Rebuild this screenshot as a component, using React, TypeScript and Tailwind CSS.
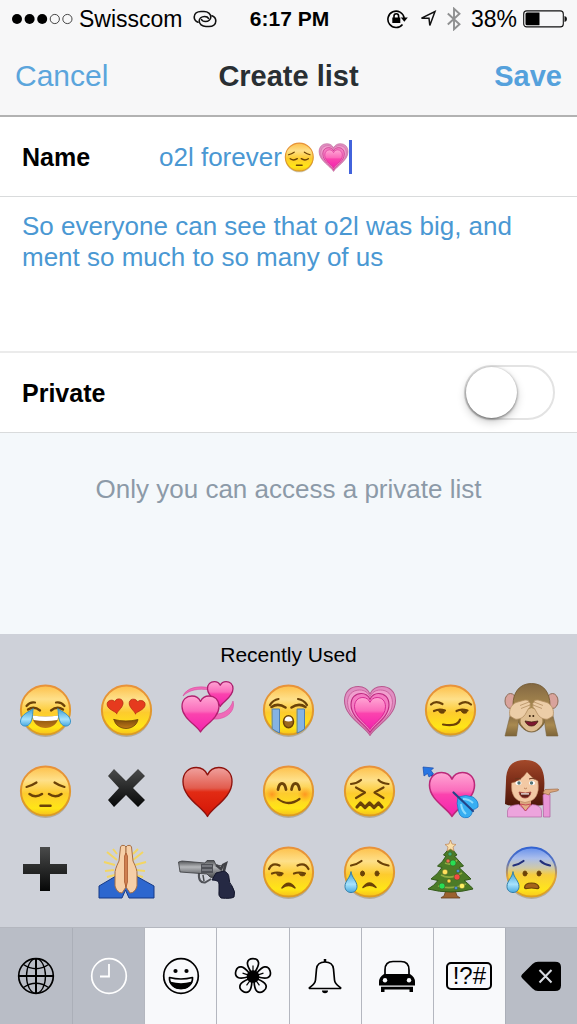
import React, { useState } from "react";

const HEART =
  "M50 100C40 81 0 62 0 29C0 10 12 0 27 0C38 0 46 6 50 15C54 6 62 0 73 0C88 0 100 10 100 29C100 62 60 81 50 100Z";
const INK = "#6b4208";

function SharedDefs() {
  return (
    <svg className="absolute h-0 w-0" aria-hidden="true">
      <defs>
        <linearGradient id="face" x1="0" y1="0" x2="0" y2="1">
          <stop offset="0" stopColor="#fdc04a" />
          <stop offset=".28" stopColor="#fee08a" />
          <stop offset=".55" stopColor="#fdcb2e" />
          <stop offset=".85" stopColor="#ffe616" />
          <stop offset="1" stopColor="#f6bf1c" />
        </linearGradient>
        <linearGradient id="blueFace" x1="0" y1="0" x2="0" y2="1">
          <stop offset="0" stopColor="#6690ec" />
          <stop offset=".22" stopColor="#a9bdec" />
          <stop offset=".42" stopColor="#cfc9a8" />
          <stop offset=".56" stopColor="#f8cd3c" />
          <stop offset=".85" stopColor="#ffe51c" />
          <stop offset="1" stopColor="#f8c91c" />
        </linearGradient>
        <linearGradient id="rim" x1="0" y1="0" x2="0" y2="1">
          <stop offset="0" stopColor="#e8923a" />
          <stop offset="1" stopColor="#dc9c22" />
        </linearGradient>
        <linearGradient id="blueRim" x1="0" y1="0" x2="0" y2="1">
          <stop offset="0" stopColor="#3263d2" />
          <stop offset=".3" stopColor="#5b75bf" />
          <stop offset=".6" stopColor="#dfa33a" />
          <stop offset="1" stopColor="#dda01f" />
        </linearGradient>
        <linearGradient id="pink" x1="0" y1="0" x2="0" y2="1">
          <stop offset="0" stopColor="#ffa6d4" />
          <stop offset=".42" stopColor="#fb6cbc" />
          <stop offset=".5" stopColor="#fb43ae" />
          <stop offset="1" stopColor="#f321ae" />
        </linearGradient>
        <linearGradient id="red" x1="0" y1="0" x2="0" y2="1">
          <stop offset="0" stopColor="#f0a19e" />
          <stop offset=".42" stopColor="#e25c4e" />
          <stop offset=".5" stopColor="#e22b14" />
          <stop offset="1" stopColor="#d31505" />
        </linearGradient>
        <linearGradient id="black" x1="0" y1="0" x2="0" y2="1">
          <stop offset="0" stopColor="#4a4b4b" />
          <stop offset="1" stopColor="#060707" />
        </linearGradient>
        <linearGradient id="tear" x1="0" y1="0" x2="0" y2="1">
          <stop offset="0" stopColor="#3f9fd8" />
          <stop offset=".6" stopColor="#a8e2fb" />
          <stop offset="1" stopColor="#49a9df" />
        </linearGradient>
        <linearGradient id="mouth" x1="0" y1="0" x2="0" y2="1">
          <stop offset="0" stopColor="#7c4a0c" />
          <stop offset="1" stopColor="#c07a17" />
        </linearGradient>
        <linearGradient id="steel" x1="0" y1="0" x2="0" y2="1">
          <stop offset="0" stopColor="#4b4d50" />
          <stop offset=".35" stopColor="#b5b7ba" />
          <stop offset="1" stopColor="#37393d" />
        </linearGradient>
        <linearGradient id="hair" x1="0" y1="0" x2="0" y2="1">
          <stop offset="0" stopColor="#a3492a" />
          <stop offset=".4" stopColor="#80301a" />
          <stop offset="1" stopColor="#4b1609" />
        </linearGradient>
        <linearGradient id="fur" x1="0" y1="0" x2="0" y2="1">
          <stop offset="0" stopColor="#836842" />
          <stop offset=".5" stopColor="#a98a50" />
          <stop offset="1" stopColor="#7d6438" />
        </linearGradient>
        <radialGradient id="blush">
          <stop offset="0" stopColor="#ff7a1c" stopOpacity=".65" />
          <stop offset="1" stopColor="#ff9a1c" stopOpacity="0" />
        </radialGradient>
      </defs>
    </svg>
  );
}

type Children = { children?: React.ReactNode };

function Emoji({ children, small }: Children & { small?: boolean }) {
  return (
    <svg
      viewBox="0 0 60 60"
      className={small ? "h-[34px] w-[34px] shrink-0 overflow-visible" : "h-[60px] w-[60px] overflow-visible"}
      aria-hidden="true"
    >
      {children}
    </svg>
  );
}

function Heart({ x, y, w, h, fill, stroke, sw = 0, r = 0 }: {
  x: number; y: number; w: number; h: number; fill: string; stroke?: string; sw?: number; r?: number;
}) {
  return (
    <path
      d={HEART}
      transform={`translate(${x} ${y}) rotate(${r}) scale(${w / 100} ${h / 100})`}
      fill={fill}
      stroke={stroke}
      strokeWidth={sw}
      strokeLinejoin="round"
    />
  );
}

function Face({ children, blue }: Children & { blue?: boolean }) {
  return (
    <>
      <ellipse cx="30.5" cy="32" rx="24.8" ry="25" fill="#8f7f5c" opacity=".45" />
      <circle cx="30.5" cy="30" r="24.6" fill={blue ? "url(#blueFace)" : "url(#face)"} stroke={blue ? "url(#blueRim)" : "url(#rim)"} strokeWidth="2" />
      <g fill="none" stroke={INK} strokeWidth="2.200" strokeLinecap="round" strokeLinejoin="round">
        {children}
      </g>
    </>
  );
}

const drop = "M12 30C11 36 6 39 6 44.5C6 48 8.500 50.500 12 50.500S18 48 18 44.500C18 39 13 36 12 30Z";

const Joy = () => (
  <Face>
    <path d="M11.500 26Q15 21.500 20 22.500M41 22.500Q46 21.500 49.500 26" />
    <path d="M13 29.500Q19 25.500 25 30.500M36 30.500Q42 25.500 48 29.500" strokeWidth="2.300" />
    <path d="M17 35.500Q30.500 37.500 44 35.500C43 44 37 48 30.500 48S18 44 17 35.500Z" fill="url(#mouth)" stroke="none" />
    <path d="M17.500 35.500Q30.500 37.500 43.500 35.500L42.500 40Q30.500 42 18.500 40Z" fill="#fff" stroke="none" />
    <path d="M18 29C13 32 6 35 5.500 41C5.300 44.500 8 46.500 11 46C17 45 17.500 37 18 29Z" fill="url(#tear)" stroke="#3a94c9" strokeWidth="1" />
    <path d="M43 29C48 32 55 35 55.500 41C55.700 44.500 53 46.500 50 46C44 45 43.500 37 43 29Z" fill="url(#tear)" stroke="#3a94c9" strokeWidth="1" />
  </Face>
);

const HeartEyes = () => (
  <Face>
    <Heart x={10.5} y={21} w={16} h={14} r={-10} fill="#e63a1e" stroke="#b52a12" sw={5} />
    <Heart x={34} y={18.5} w={16} h={14} r={10} fill="#e63a1e" stroke="#b52a12" sw={5} />
    <path d="M18 39.500Q30 42.500 42 39.500C41 45.500 35 48.500 30 48.500S19 45.500 18 39.500Z" fill="url(#mouth)" strokeWidth=".8" />
  </Face>
);

const TwoHearts = () => (
  <>
    <path d="M6 16C9 8 21 5 33 8L33 10C21 8 12 10 6 16ZM56 21C59 32 48 40 36 39L39 34C46 34 53 30 56 21Z" fill="#f06ab8" stroke="#d84b9f" strokeWidth=".6" />
    <Heart x={30.5} y={1.5} w={25.5} h={25} fill="url(#pink)" stroke="#a81e6c" sw={5} />
    <Heart x={5} y={16} w={37} h={36} fill="url(#pink)" stroke="#b1206f" sw={3.5} />
  </>
);

const Sob = () => (
  <Face>
    <path d="M12 25Q15 20 20.500 19M40 19Q46 20 49 25" />
    <path d="M14.500 29H21.500V53Q18 51.500 14.500 49ZM39.500 29H46.500V49Q43 51.500 39.500 53Z" fill="#85b3e3" stroke="#4d7fb0" strokeWidth="1" />
    <path d="M13.500 27Q20 22.500 27.500 27.500M33.500 27.500Q41 22.500 47.500 27" strokeWidth="2.600" />
    <ellipse cx="30.500" cy="41.700" rx="5" ry="6" fill="#9c6a1e" strokeWidth="1.500" />
    <path d="M26.500 40.500Q27 36.800 30.500 36.600Q34 36.800 34.500 40.500Q30.500 42.500 26.500 40.500Z" fill="#fff" stroke="none" />
  </Face>
);

const GrowingHeart = () => (
  <>
    <Heart x={5.5} y={6.5} w={51} h={49} fill="#e08fc2" stroke="#b8578e" sw={2} />
    <Heart x={8.5} y={10} w={45} h={44} fill="#f09fce" stroke="#c9629d" sw={2} />
    <Heart x={12} y={13.500} w={38} h={39} fill="#f47cc2" stroke="#bd2a80" sw={3} />
    <Heart x={15.5} y={17.500} w={31} h={32} fill="url(#pink)" stroke="#d32591" sw={3} />
  </>
);

const Smirk = () => (
  <Face>
    <path d="M11 24.500Q15.500 20 22.500 24M39.500 24Q46 20 51 24.500" />
    <path d="M14 31Q19 28.500 25 30.500M36.500 31Q41 28.500 47.500 30.500" />
    <path d="M18 30.500Q20 34.500 24 33L24.500 30.500ZM40.500 30.500Q42.500 34.500 46.500 33L47 30.500Z" fill={INK} strokeWidth=".8" />
    <path d="M23 44.500Q38 47 40 39.500" />
  </Face>
);

const Monkey = () => (
  <>
    <ellipse cx="9.500" cy="21" rx="5.500" ry="7.500" fill="#d9a39c" stroke="#8e6c57" />
    <ellipse cx="51.500" cy="21" rx="5.500" ry="7.500" fill="#d9a39c" stroke="#8e6c57" />
    <path d="M30.500 3.500C18 3.500 12 13 12 25C12 35 17 41 19 45Q24 52 30.500 52T42 45C44 41 49 35 49 25C49 13 43 3.500 30.500 3.500Z" fill="url(#fur)" stroke="#6e552f" strokeWidth=".8" />
    <path d="M30.500 28C22 31 18 38 20 44Q25 51.500 30.500 51.500T41 44C43 38 39 31 30.500 28Z" fill="#dfbe92" />
    <circle cx="28.800" cy="36" r="1" fill="#3b2410" /><circle cx="32.300" cy="36" r="1" fill="#3b2410" />
    <path d="M24 41Q30.500 43 37 41Q35 46 30.500 46T24 41Z" fill="#7e1730" stroke="#43200e" strokeWidth=".8" />
    <path d="M9.500 34L18 38L15.500 56H4ZM51.500 34L43 38L45.500 56H57Z" fill="url(#fur)" stroke="#7a6440" strokeWidth=".6" />
    <g fill="#eccda7" stroke="#b48f62" strokeWidth=".8">
      <path d="M9 36C7.500 30 10 25 15 22.500L24 20Q28 19.500 28 22Q30 23 29 25Q30 27.500 27.500 28.500L25 33C23 37.500 18 40 14 39Z" />
      <path d="M52 36C53.500 30 51 25 46 22.500L37 20Q33 19.500 33 22Q31 23 32 25Q31 27.500 33.500 28.500L36 33C38 37.500 43 40 47 39Z" />
      <path d="M19 25.500L28 22M20 28.500L29 25M42 25.500L33 22M41 28.500L32 25" />
    </g>
  </>
);

const Pensive = () => (
  <Face>
    <path d="M11.500 26Q17 24.500 21.500 21.500M39.500 21.500Q44 24.500 49.500 26" />
    <path d="M14.500 33Q20.500 37.500 27 33M34 33Q40.500 37.500 46.500 33" strokeWidth="2.500" />
    <path d="M25.500 44.700H35.500" strokeWidth="2.500" />
  </Face>
);

const Cross = () => <path d="M18 8L30 20L42 8L49 15L37 27L49 39L42 46L30 34L18 46L12 39L23 27L12 15Z" fill="url(#black)" />;
const RedHeart = () => <Heart x={6} y={6.5} w={49} h={49} fill="url(#red)" stroke="#8e120d" sw={2.8} />;

const Blush = () => (
  <Face>
    <circle cx="14" cy="33.500" r="8" fill="url(#blush)" stroke="none" />
    <circle cx="47" cy="33.500" r="8" fill="url(#blush)" stroke="none" />
    <path d="M20 28.500Q21 22.500 24 22.500T28 28.500M33.500 28.500Q34.500 22.500 37.500 22.500T41.500 28.500" strokeWidth="2.800" />
    <path d="M20 38Q30.500 46 41.500 38" strokeWidth="2.200" />
  </Face>
);

const Confounded = () => (
  <Face>
    <path d="M12 23Q18 22.500 22 19M39.500 19Q43 22.500 49.500 23M17 26.500L26 31.500L17 37M44.500 26.500L35.500 31.500L44.500 37" />
    <path d="M18 46L21.500 42L26 46.500L30.500 42L35 46.500L39.500 42L43 46" strokeWidth="3.200" />
  </Face>
);

const Cupid = () => (
  <>
    <path d="M7 10L20 21" stroke="#254faf" strokeWidth="2.500" />
    <path d="M3 6L13.500 7L11 9.500L13.500 13L9 16L7.500 12.500L4 15Z" fill="#2776e3" stroke="#184baa" strokeWidth=".7" />
    <Heart x={9.5} y={11.5} w={45} h={44} fill="url(#pink)" stroke="#bb2879" sw={3.5} />
    <path d="M38 36Q46 33 53 36Q59 40 58 46Q56 48 52 49Q53 54 48 56.500Q40 58 38.500 50Q36 42 38 36Z" fill="#37aef2" stroke="#1978c9" strokeWidth=".8" />
    <path d="M43 38Q49 38 53 42M41 43Q42 50 46 53" fill="none" stroke="#8cdbfd" strokeWidth="2" />
    <path d="M33.500 31.500L53 50" stroke="#244588" strokeWidth="2.200" strokeLinecap="round" />
  </>
);

const Woman = () => (
  <>
    <path d="M24 -1C10 -1 5 7 5 20L4 43Q14 47 24 46L43 44Q44 39 43 30C45 10 40 -1 24 -1Z" fill="url(#hair)" />
    <path d="M19 36H30V46H19Z" fill="#dca67e" />
    <path d="M6.500 56V50Q7 44 18 43.500L24.500 50L31 43.500Q40 44 40.500 50V56Z" fill="#eda4dd" stroke="#b36aa4" strokeWidth=".7" />
    <path d="M19 43L24.500 50L30 43Q25 45 19 43Z" fill="#e3af87" stroke="#c1304e" strokeWidth=".8" />
    <path d="M10.500 22Q20 20 26 11Q32 18 37 20Q40 40 24 41.500Q9 40 10.500 22Z" fill="#f3c9a4" stroke="#ad7250" strokeWidth=".5" />
    <path d="M42 34Q45 30.500 49 33L49 56H42.500Z" fill="#e995d6" stroke="#ac5d9d" strokeWidth=".7" />
    <path d="M42 32L44 28.500L57 28Q59 29 56 30L49 31.500L48 34Z" fill="#dda77c" stroke="#9e6b48" strokeWidth=".7" />
    <path d="M14 18Q17 16.500 20 18M28 18Q31 16.500 34 18" stroke="#6c351c" fill="none" />
    <ellipse cx="17.500" cy="22" rx="3" ry="2" fill="#fff" /><ellipse cx="31" cy="22" rx="3" ry="2" fill="#fff" />
    <circle cx="18" cy="22" r="1.700" fill="#527475" /><circle cx="30.500" cy="22" r="1.700" fill="#527475" />
    <path d="M23 27Q24.500 28.500 26 27" fill="none" stroke="#bd835d" />
    <path d="M18 31Q24.500 33 30 31Q29 37 24 37T18 31Z" fill="#612018" stroke="#a84840" strokeWidth=".8" />
    <path d="M20 32.300H28V33.500H20Z" fill="#fff" />
  </>
);

const Plus = () => <path d="M25 5H35V22H52V32H35V49H25V32H8V22H25Z" fill="url(#black)" />;

const Pray = () => (
  <>
    <path d="M21 18L11 10M19 23L8 20M18 28L9 29M19 33L11 35M37 18L47 10M39 23L50 20M40 28L49 29M39 33L47 35M21 12L17 7M37 12L42 7" stroke="#f3d663" strokeWidth="2" />
    <path d="M20 34L3 44V56H26L29.500 48L33 56H58V44L40 34Z" fill="#2d67cf" stroke="#173b87" strokeWidth="1" />
    <path d="M28.500 3.500Q25 2.500 24.500 5L23 19Q18.500 28 19 32V44Q21 51 26 51L30 45V5Z" fill="#f6cfa7" stroke="#a66e44" />
    <path d="M31.500 3.500Q35 2.500 35.500 5L37 19Q41.500 28 41 32V44Q39 51 34 51L30 45V5Z" fill="#f6cfa7" stroke="#a66e44" />
    <path d="M28.500 14V40L30 45L31.500 40V14L30 11Z" fill="#ce7f50" stroke="#a25028" strokeWidth=".7" />
  </>
);

const Gun = () => (
  <>
    <path d="M22 31Q21 41 28 40.500L34 37" fill="none" stroke="#515359" strokeWidth="2" />
    <path d="M1.500 20L5 19L28 21L30 18.500H37L39 23L46 24L47 31L40 37L33 35L30 32L3 30Z" fill="url(#steel)" stroke="#393a3d" strokeWidth=".8" />
    <path d="M24 22H36V31H24Z" fill="#505258" />
    <path d="M25 24H35M25 28H35" stroke="#9c9ea3" strokeWidth="1.200" />
    <path d="M39 23L44 27L46 23L49 21.500L48 25L47 29" fill="none" stroke="#414247" strokeWidth="2.500" />
    <path d="M39 31L47 29Q52 31 52 36Q52 41 55 44Q59 50 57 55Q54 57 44 56Q41 54 42 49V42Q42 38 35 38Z" fill="#252943" stroke="#12152a" />
    <path d="M26 33L27 39" stroke="#4a4c50" strokeWidth="1.500" />
  </>
);

const Unamused = () => (
  <Face>
    <path d="M11 27Q14 20 21.500 23.500M39.500 23.500Q47 20 50.500 27" />
    <path d="M14 31.500Q19 29.500 24.500 31.500M36 31.500Q41 29.500 47 31.500" />
    <path d="M18.500 31.500Q19 35 24 33.500V31.500ZM41 31.500Q42 35 46.500 33.500V31.500Z" fill={INK} strokeWidth=".8" />
    <path d="M24 46Q30.500 36.500 37 46Q30.500 41 24 46Z" fill={INK} strokeWidth="1.500" />
  </Face>
);

const Relieved = () => (
  <Face>
    <path d="M12 23.500Q18 22.500 22.500 19M39 19Q43 22.500 49.500 23.500" />
    <ellipse cx="23.500" cy="31.500" rx="2" ry="2.500" fill={INK} strokeWidth="1" />
    <ellipse cx="38" cy="31.500" rx="2" ry="2.500" fill={INK} strokeWidth="1" />
    <path d="M24 45.500Q30.500 36.500 37 45.500Q30.500 41 24 45.500Z" fill={INK} strokeWidth="1.500" />
    <path d={drop} fill="url(#tear)" stroke="#327fa8" strokeWidth="1" />
  </Face>
);

const Tree = () => (
  <>
    <path d="M27 45L24 54Q20 56 21 56H40Q41 56 37 54L34 45Z" fill="#9b612e" stroke="#68401d" strokeWidth=".8" />
    <path d="M30.500 5L37 13L34.500 14L43.500 24L39 25.500L51 37L44 38.500Q51 44 53 47Q31 53 8 47Q14 44 18 38.500L11 37Q18 32 22 25.500L17.500 24Q23 20 26 14L23.500 13Z" fill="#4c7b27" stroke="#315918" />
    <path d="M21 33Q30 38 42 31M18 44Q31 48 46 42M25 21Q32 24 37 18" stroke="#91ac42" strokeWidth="1.800" fill="none" />
    <path d="M30.500 -2L32 2L36 2.500L33 5L34 9L30.500 7L27 9L28 5L25 2.500L29 2Z" fill="#f9dfaa" stroke="#bf8451" strokeWidth=".7" />
    <g strokeWidth=".5" stroke="#3d5420">
      <circle cx="30" cy="12" r="2" fill="#3eaf79" /><circle cx="33" cy="21" r="3" fill="#28df54" /><circle cx="28" cy="19" r="2" fill="#ed704d" />
      <circle cx="25" cy="30" r="2.800" fill="#ffe05c" /><circle cx="37" cy="35" r="3" fill="#f34b42" /><circle cx="29" cy="39" r="2" fill="#ffd94a" />
      <circle cx="22" cy="44" r="3" fill="#28df54" /><circle cx="42" cy="44" r="2.800" fill="#fff063" /><circle cx="38" cy="29" r="1.800" fill="#4c90ce" />
      <circle cx="36" cy="46" r="1.800" fill="#4c90ce" />
    </g>
  </>
);

const Anxious = () => (
  <Face blue>
    <path d="M12.500 23.500Q18 22.500 22.500 19M39.500 19Q43 22.500 49 23.500" stroke="#23307c" />
    <ellipse cx="24" cy="31.500" rx="2" ry="2.500" fill={INK} strokeWidth="1" />
    <ellipse cx="38" cy="31.500" rx="2" ry="2.500" fill={INK} strokeWidth="1" />
    <path d="M23.500 45.500Q24 41 30.500 41T38 45.500Q37.500 47 35 46.500Q30.500 45.500 26 46.500Q24 47 23.500 45.500Z" fill="#a5641b" strokeWidth="1.200" />
    <path d={drop} fill="url(#tear)" stroke="#327fa8" strokeWidth="1" />
  </Face>
);

const RECENT: [string, () => React.ReactElement][] = [
  ["Tears of joy", Joy], ["Heart eyes", HeartEyes], ["Two hearts", TwoHearts], ["Sobbing", Sob], ["Growing heart", GrowingHeart], ["Smirk", Smirk], ["See no evil", Monkey],
  ["Pensive", Pensive], ["Cross", Cross], ["Red heart", RedHeart], ["Blush", Blush], ["Confounded", Confounded], ["Heart with arrow", Cupid], ["Tipping hand", Woman],
  ["Plus", Plus], ["Folded hands", Pray], ["Revolver", Gun], ["Unamused", Unamused], ["Sad but relieved", Relieved], ["Christmas tree", Tree], ["Anxious", Anxious],
];

function KeyIcon({ children }: Children) {
  return (
    <svg viewBox="0 0 48 40" className="h-10 w-12" fill="none" stroke="currentColor" strokeWidth="1.700" strokeLinejoin="round" aria-hidden="true">
      {children}
    </svg>
  );
}

const PETAL = "M22 16C19.500 12 18 9 18.500 6.500C19.500 1.200 28.500 1.200 29.500 6.500C30 9 28.500 12 26 16";

const KEYS: { name: string; tone: string; icon: React.ReactNode }[] = [
  {
    name: "Next keyboard",
    tone: "bg-[#b9bdc6] border-[#b9bdc6] text-black",
    icon: (
      <KeyIcon>
        <circle cx="24" cy="20" r="17.300" />
        <ellipse cx="24" cy="20" rx="9.500" ry="17.300" strokeWidth="1.300" />
        <path d="M24 2.700V37.300M6.700 20H41.300" strokeWidth="2" />
        <path d="M11.500 8.500Q24 17 36.500 8.500M11.500 31.500Q24 23 36.500 31.500" strokeWidth="1.300" />
      </KeyIcon>
    ),
  },
  {
    name: "Recent",
    tone: "bg-[#b9bdc6] border-[#abafb8] text-white",
    icon: <KeyIcon><circle cx="24" cy="20" r="17.300" /><path d="M24 8V20.500H15" strokeWidth="1.800" strokeLinejoin="miter" /></KeyIcon>,
  },
  {
    name: "People",
    tone: "bg-[#f8f9fb] border-[#b4b7bf] text-black",
    icon: (
      <KeyIcon>
        <circle cx="24" cy="20" r="17.300" />
        <circle cx="18.500" cy="15" r="2.100" fill="currentColor" stroke="none" />
        <circle cx="29.500" cy="15" r="2.100" fill="currentColor" stroke="none" />
        <path d="M12.500 21.500Q24 24.500 35.500 21.500C36 28 30 32.500 24 32.500S12 28 12.500 21.500Z" />
        <path d="M13.500 26.500Q24 29.500 34.500 26.500Q31 32.500 24 32.500T13.500 26.500Z" fill="currentColor" />
      </KeyIcon>
    ),
  },
  {
    name: "Nature",
    tone: "bg-[#f8f9fb] border-[#b4b7bf] text-black",
    icon: (
      <KeyIcon>
        {[0, 72, 144, 216, 288].map((a) => (
          <g key={a} transform={`rotate(${a} 24 20.500)`}><path d={PETAL} /><path d="M24 9.500V16" strokeWidth="1.200" /></g>
        ))}
        <circle cx="24" cy="20.500" r="5.500" fill="currentColor" />
      </KeyIcon>
    ),
  },
  {
    name: "Objects",
    tone: "bg-[#f8f9fb] border-[#b4b7bf] text-black",
    icon: (
      <KeyIcon>
        <path d="M24 3V6" strokeWidth="2.500" />
        <path d="M8.500 32.500C7 31 14 30 14.500 24L15.500 13C16 8 20 6 24 6S32 8 32.500 13L33.500 24C34 30 41 31 39.500 32.500Z" />
        <path d="M21 34.500H27Q27 37.300 24 37.300T21 34.500Z" fill="currentColor" stroke="none" />
      </KeyIcon>
    ),
  },
  {
    name: "Places",
    tone: "bg-[#f8f9fb] border-[#b4b7bf] text-black",
    icon: (
      <KeyIcon>
        <path d="M12 19V14Q12 5.500 20 5.500H28Q36 5.500 36 14V19" />
        <path d="M11 18H37Q42 21 42 26V29.500H6V26Q6 21 11 18Z" fill="currentColor" stroke="none" />
        <circle cx="12" cy="24.300" r="2.200" fill="#f8f9fb" stroke="none" />
        <circle cx="36" cy="24.300" r="2.200" fill="#f8f9fb" stroke="none" />
        <path d="M8 30.800H40V36H36.500V33.500H11.500V36H8Z" fill="currentColor" stroke="none" />
      </KeyIcon>
    ),
  },
  {
    name: "Symbols",
    tone: "bg-[#f8f9fb] border-[#b4b7bf] text-black",
    icon: <span className="flex h-7 w-[46px] items-center justify-center rounded-[5px] border-2 border-black text-2xl leading-6">!?#</span>,
  },
  {
    name: "Delete",
    tone: "bg-[#b9bdc6] border-[#abafb8] text-black",
    icon: (
      <KeyIcon>
        <path d="M5 18.500L15.500 8Q18 5.700 21 5.700H38Q44 5.700 44 11V29.500Q44 35 38 35H21Q18 35 15.500 32.500L5 22Q3.200 20.300 5 18.500Z" fill="currentColor" stroke="none" />
        <path d="M22.500 14L34.500 26.500M34.500 14L22.500 26.500" stroke="#d7dae0" strokeWidth="2" />
      </KeyIcon>
    ),
  },
];

function StatusBar() {
  return (
    <div className="grid h-[38px] grid-cols-[1fr_auto_1fr] items-center pr-[10px] pl-3 text-black">
      <div className="flex items-center">
        <svg viewBox="0 0 61 12" className="h-3 w-[61px]" aria-hidden="true">
          {[0, 1, 2, 3, 4].map((i) => (
            <circle key={i} cx={5 + i * 12.6} cy="6" r={i < 3 ? 5 : 4.6} fill={i < 3 ? "#000" : "none"} stroke={i < 3 ? "none" : "#333"} strokeWidth=".9" />
          ))}
        </svg>
        <span className="ml-1.5 text-[23px] leading-7">Swisscom</span>
        <svg viewBox="0 0 24 18" className="ml-2.5 h-[18px] w-6" fill="none" stroke="#111" strokeWidth="1.600" strokeLinecap="round" aria-hidden="true">
          <path d="M5 12.200C2.500 11.200 1.200 9.300 1.200 7C1.200 3.500 4.200 1.500 8 1.500H11C15 1.500 17.800 4 17.800 7C17.800 9.500 15.500 11.500 12.500 11.500C10.500 11.500 9 10.700 8.500 9.500" />
          <path d="M19 5.800C21.500 6.800 22.800 8.700 22.800 11C22.800 14.500 19.800 16.500 16 16.500H13C9 16.500 6.200 14 6.200 11C6.200 8.500 8.500 6.500 11.500 6.500C13.500 6.500 15 7.300 15.500 8.500" />
        </svg>
      </div>
      <time className="text-[21px] leading-7 font-bold">6:17 PM</time>
      <div className="flex items-center justify-end">
        <svg viewBox="0 0 22 20" className="h-5 w-[22px]" fill="none" stroke="#000" strokeWidth="1.600" aria-hidden="true">
          <path d="M15.500 15.500A8.200 8.200 0 1 1 17.200 9" />
          <path d="M13.800 8.500H20.800L17.300 12.700Z" fill="#000" stroke="none" />
          <path d="M5.300 8.500H13.300V14H5.300Z" fill="#000" stroke="none" />
          <path d="M7 9V7Q7 4.700 9.300 4.700T11.600 7V9" />
        </svg>
        <svg viewBox="0 0 18 18" className="ml-2.5 h-[18px] w-[18px]" fill="none" stroke="#111" strokeWidth="1.500" strokeLinejoin="miter" aria-hidden="true">
          <path d="M2.500 8.200L16 1.500L10.800 15.500L10 8.200Z" />
        </svg>
        <svg viewBox="0 0 14 24" className="ml-2.5 h-6 w-3.5" fill="none" stroke="#8f9091" strokeWidth="1.900" aria-hidden="true">
          <path d="M.8 6.500L12.500 17.300L7 22.300V1.700L12.500 6.700L.8 17.500" />
        </svg>
        <span className="ml-2.5 text-[23px] leading-7">38%</span>
        <svg viewBox="0 0 44 18" className="ml-1.5 h-[18px] w-11" aria-hidden="true">
          <rect x=".7" y=".9" width="39.600" height="16" rx="3" fill="none" stroke="#111" strokeWidth="1.100" />
          <path d="M4 2.500H16.500V15.300H4Q2.500 15.300 2.500 13.800V4Q2.500 2.500 4 2.500Z" fill="#000" />
          <path d="M41.500 6Q44 6.500 44 9T41.500 12Z" fill="#111" />
        </svg>
      </div>
    </div>
  );
}

export default function App() {
  const [name, setName] = useState("o2l forever");
  const [about, setAbout] = useState("So everyone can see that o2l was big, and ment so much to so many of us");
  const [isPrivate, setPrivate] = useState(false);

  return (
    <div className="flex min-h-screen flex-col bg-[#f4f8fb] font-['Liberation_Sans',Arial,sans-serif]">
      <SharedDefs />
      <header className="border-b-2 border-[#b2b2b2] bg-[#f7f7f8]">
        <StatusBar />
        <nav className="grid h-[77px] grid-cols-[1fr_auto_1fr] items-center px-[15px] pb-0.5">
          <button type="button" className="justify-self-start text-[30px] leading-9 text-[#5ba5dc]">Cancel</button>
          <h1 className="text-[29px] leading-9 font-bold text-[#292f33]">Create list</h1>
          <button type="button" className="justify-self-end text-[29px] leading-9 font-bold text-[#55a1dc]">Save</button>
        </nav>
      </header>

      <main className="flex flex-1 flex-col">
        <div className="flex h-20 items-center border-b border-[#d9dbdc] bg-white px-[22px]">
          <label htmlFor="list-name" className="w-[137px] text-[25px] leading-8 font-bold text-black">Name</label>
          <input
            id="list-name"
            value={name}
            onChange={(e) => setName(e.target.value)}
            className="field-sizing-content p-0 text-[26px] leading-8 text-[#4a98d3] outline-none"
          />
          <Emoji small><Pensive /></Emoji>
          <Emoji small><GrowingHeart /></Emoji>
          <span className="-ml-px h-[34px] w-[3px] bg-[#4263dc]" />
        </div>
        <div className="h-[156px] border-b-2 border-[#ebebeb] bg-white px-[22px] pt-3.5">
          <textarea
            aria-label="Description"
            value={about}
            onChange={(e) => setAbout(e.target.value)}
            className="block h-[124px] w-full resize-none overflow-hidden p-0 text-[26px] leading-[31px] text-[#4a98d3] outline-none"
          />
        </div>
        <div className="flex h-20 items-center justify-between border-b border-[#d9dbdc] bg-white px-[22px]">
          <label htmlFor="list-private" className="text-[25px] leading-8 font-bold text-black">Private</label>
          <input
            id="list-private"
            type="checkbox"
            role="switch"
            checked={isPrivate}
            onChange={(e) => setPrivate(e.target.checked)}
            className="h-[55px] w-[91px] appearance-none rounded-full border-2 border-[#e3e3e3] bg-white before:block before:h-[51px] before:w-[51px] before:rounded-full before:bg-white before:shadow-[0_4px_10px_rgba(0,0,0,0.2),0_1px_3px_rgba(0,0,0,0.5)] before:content-[''] checked:bg-[#4cd964] checked:before:translate-x-[36px]"
          />
        </div>
        <p className="px-4 pt-10 text-center text-[26px] leading-8 text-[#8c9aa8]">Only you can access a private list</p>
      </main>

      <section aria-label="Emoji keyboard" className="bg-[#ced1d9]">
        <h2 className="pt-[7px] text-center text-[21px] leading-7 text-black">Recently Used</h2>
        <div className="grid grid-cols-7 pr-1.5 pb-[15px] pl-1">
          {RECENT.map(([label, Icon]) => (
            <button key={label} type="button" aria-label={label} className="flex h-[81px] items-center justify-center">
              <Emoji><Icon /></Emoji>
            </button>
          ))}
        </div>
        <div className="grid h-[97px] grid-cols-8 border-t border-[#b4b7bf]">
          {KEYS.map((k) => (
            <button key={k.name} type="button" aria-label={k.name} className={`flex items-center justify-center border-l first:border-l-0 ${k.tone}`}>
              {k.icon}
            </button>
          ))}
        </div>
      </section>
    </div>
  );
}
